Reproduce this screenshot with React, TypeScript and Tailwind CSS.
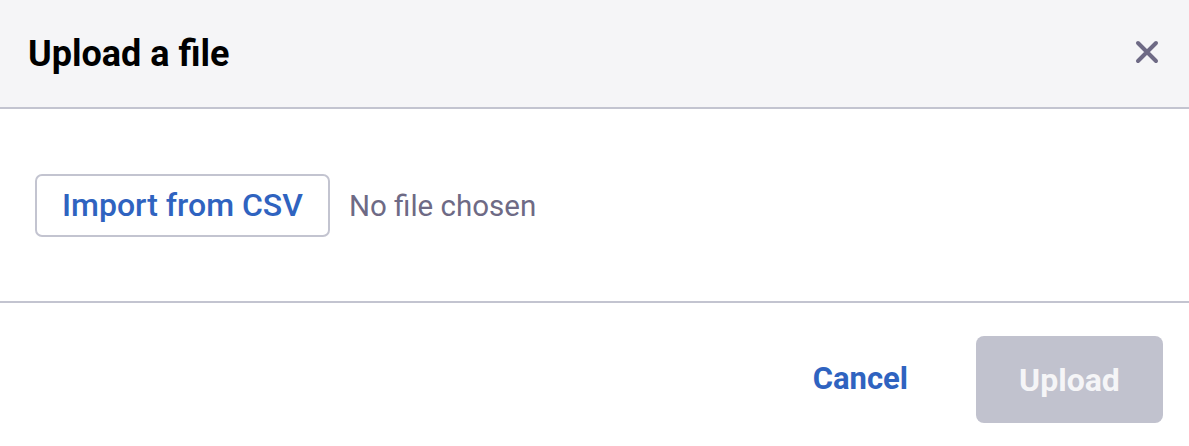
import { useState } from "react";

const App = () => {
  const [fileName, setFileName] = useState<string | null>(null);

  return (
    <div className="min-h-screen bg-white font-['Roboto',sans-serif]">
      {/* Header */}
      <div className="h-[109px] bg-[#f5f5f7] border-b-2 border-[#c3c4d0] flex items-center justify-between pl-[28px] pr-[30px]">
        <h1 className="text-[36px] font-bold text-black leading-none">Upload a file</h1>
        <button className="text-[#6e6a85] -mt-[4px]">
          <svg width="24" height="24" viewBox="0 0 24 24" fill="none">
            <path d="M3 3L21 21M21 3L3 21" stroke="currentColor" strokeWidth="4" strokeLinecap="round" />
          </svg>
        </button>
      </div>

      {/* Body */}
      <div className="h-[194px] border-b-2 border-[#c3c4d0] flex items-center pl-[35px]">
        <label className="flex items-center gap-[19px] cursor-pointer">
          <span className="h-[63px] pl-[25px] pr-[25px] border-2 border-[#c3c4d0] rounded-[7px] flex items-center text-[32px] font-medium text-[#2f63c0]">
            Import from CSV
          </span>
          <span className="text-[29.5px] text-[#6e6a85] mt-[3px]">{fileName ?? "No file chosen"}</span>
          <input
            type="file"
            accept=".csv"
            className="hidden"
            onChange={(e) => setFileName(e.target.files?.[0]?.name ?? null)}
          />
        </label>
      </div>

      {/* Footer */}
      <div className="flex items-center justify-end gap-[68px] pr-[26px] pt-[33px]">
        <button className="text-[31px] font-bold text-[#2f63c0]">Cancel</button>
        <button
          disabled
          className="h-[87px] w-[187px] rounded-[8px] bg-[#c1c2ce] text-[32px] font-bold text-[#f5f5f7]"
        >
          Upload
        </button>
      </div>
    </div>
  );
};

export default App;
